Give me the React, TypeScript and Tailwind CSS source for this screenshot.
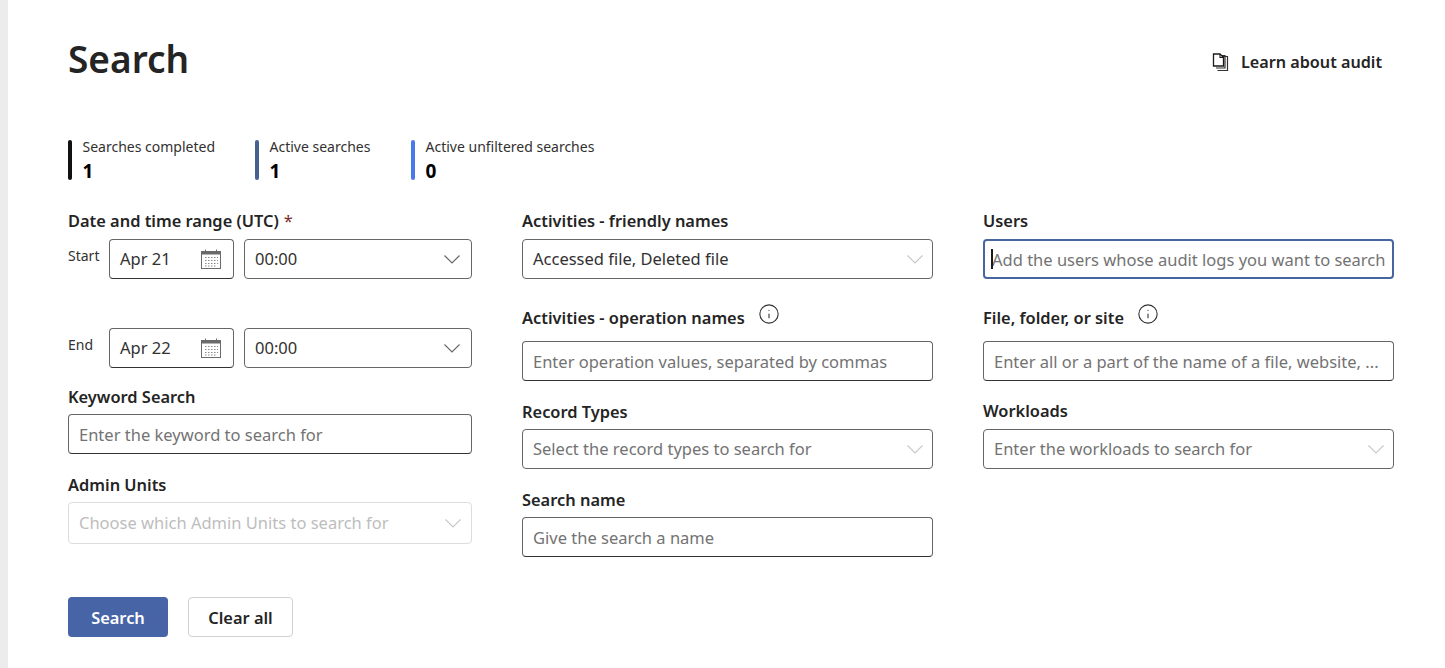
import { Info } from 'lucide-react'

function Chevron({ color }: { color: string }) {
  return (
    <svg width="16" height="9" viewBox="0 0 16 9" fill="none" className={`shrink-0 ${color}`}>
      <path d="M.5.5 8 8 15.5.5" stroke="currentColor" strokeWidth="1.1" />
    </svg>
  )
}

function CalendarIcon() {
  return (
    <svg width="22" height="22" viewBox="0 0 22 22" fill="none" className="shrink-0 text-[#6b6b6b]">
      <rect x="1.5" y="3.5" width="19" height="17" stroke="currentColor" />
      <rect x="1.5" y="3.5" width="19" height="3" fill="currentColor" />
      <path d="M5.5 1.5v3M16.5 1.5v3" stroke="currentColor" />
      <path
        d="M5 9.5h1.5M8 9.5h1.5M11 9.5h1.5M14 9.5h1.5M17 9.5h1M5 12.5h1.5M8 12.5h1.5M11 12.5h1.5M14 12.5h1.5M17 12.5h1M5 15.5h1.5M8 15.5h1.5M11 15.5h1.5M14 15.5h1.5M17 15.5h1M5 18h1.5M8 18h1.5M11 18h1.5M14 18h1.5"
        stroke="#8a8a8a"
      />
    </svg>
  )
}

function PagesIcon() {
  return (
    <svg width="18" height="19" viewBox="0 0 18 19" fill="none" className="shrink-0">
      <path d="M5 3.5h10.5v14H5.5" stroke="#323130" strokeWidth="1.2" />
      <path d="M4 2.5h9v12.5H4" stroke="#323130" strokeWidth="1.2" />
      <path d="M1.5 1H8l3.5 3.5V13h-10z" fill="#fff" stroke="#1b1a19" strokeWidth="1.3" />
      <path d="M8 1v3.5h3.5" stroke="#1b1a19" strokeWidth="1.1" />
    </svg>
  )
}

function Stat({ label, value, bar, width }: { label: string; value: string; bar: string; width: string }) {
  return (
    <div className={`flex h-10 gap-[10.5px] ${width}`}>
      <div className={`h-10 w-1 rounded-sm ${bar}`} />
      <div className="-mt-[2px]">
        <p className="text-[14px] leading-[18px] text-[#323130]">{label}</p>
        <p className="mt-1 text-[19px] font-bold leading-[22px] text-black">{value}</p>
      </div>
    </div>
  )
}

function Label({
  text,
  info,
  required,
  className,
}: {
  text: string
  info?: boolean
  required?: boolean
  className?: string
}) {
  return (
    <div className={`flex h-5 items-center text-[16.4px] font-semibold leading-5 text-[#242424] ${className ?? ''}`}>
      {text}
      {required && <span className="ml-[5px] font-normal text-[#7a2a2a]">*</span>}
      {info && <Info size={22} strokeWidth={1.2} className="-mt-2 ml-[13px] text-[#323130]" />}
    </div>
  )
}

function SelectBox({ text, placeholder }: { text?: string; placeholder?: string }) {
  return (
    <div className="flex h-10 items-center justify-between rounded border border-[#666] bg-white pl-[10px] pr-[9px]">
      <span className={`text-[16.5px] ${text ? 'text-[#323130]' : 'text-[#737373]'}`}>{text ?? placeholder}</span>
      <Chevron color="text-[#c8c8c8]" />
    </div>
  )
}

function TextBox({ placeholder }: { placeholder: string }) {
  return (
    <input
      placeholder={placeholder}
      className="block h-10 w-full rounded border border-[#666] border-b-[#333] bg-white px-[10px] text-[16.5px] outline-none placeholder:text-[#737373]"
    />
  )
}

function DateRow({ label, date }: { label: string; date: string }) {
  return (
    <div className="flex h-10">
      <span className="w-[41px] shrink-0 pt-[7px] text-[14px] leading-5 text-[#323130]">{label}</span>
      <div className="flex h-10 w-[125px] shrink-0 items-center justify-between rounded border border-[#666] border-b-[#333] pl-[10px] pr-[11px]">
        <span className="text-[16.5px] text-[#323130]">{date}</span>
        <CalendarIcon />
      </div>
      <div className="ml-[10px] flex h-10 flex-1 items-center justify-between rounded-sm border border-[#666] pl-[10px] pr-[11px]">
        <span className="text-[16.5px] text-[#323130]">00:00</span>
        <Chevron color="text-[#666]" />
      </div>
    </div>
  )
}

export default function App() {
  return (
    <div
      className="flex h-[668px] overflow-hidden bg-white"
      style={{ fontFamily: '"Noto Sans", "Open Sans", sans-serif' }}
    >
      <div className="w-2 shrink-0 bg-[#ececec]" />

      <div className="w-[1386px] shrink-0 pl-[60px]">
        {/* Header */}
        <div className="flex h-[140px] items-start justify-between">
          <h1 className="mt-[33px] text-[37px] font-semibold leading-[52px] text-[#242424]">Search</h1>
          <div className="mt-[50px] mr-[12px] flex items-center gap-[11px] text-[16.2px] font-semibold leading-6 text-[#242424]">
            <PagesIcon />
            Learn about audit
          </div>
        </div>

        {/* Counters */}
        <div className="flex">
          <Stat label="Searches completed" value="1" bar="bg-[#111]" width="w-[187px]" />
          <Stat label="Active searches" value="1" bar="bg-[#47618f]" width="w-[156px]" />
          <Stat label="Active unfiltered searches" value="0" bar="bg-[#4a7ae8]" width="w-[200px]" />
        </div>

        {/* Form columns */}
        <div className="mt-[31px] flex gap-[50px]">
          <div className="w-[404px] shrink-0">
            <Label text="Date and time range (UTC)" required />
            <div className="mt-2">
              <DateRow label="Start" date="Apr 21" />
            </div>
            <div className="mt-[49px]">
              <DateRow label="End" date="Apr 22" />
            </div>
            <Label text="Keyword Search" className="mt-[19px]" />
            <div className="mt-[7px]">
              <TextBox placeholder="Enter the keyword to search for" />
            </div>
            <Label text="Admin Units" className="mt-[21px]" />
            <div className="mt-[7px] flex h-[42px] items-center justify-between rounded border border-[#dcdcdc] pl-[10px] pr-[10px]">
              <span className="text-[16.5px] text-[#bdbdbd]">Choose which Admin Units to search for</span>
              <Chevron color="text-[#c8c8c8]" />
            </div>
          </div>

          <div className="w-[411px] shrink-0">
            <Label text="Activities - friendly names" />
            <div className="mt-2">
              <SelectBox text="Accessed file, Deleted file" />
            </div>
            <Label text="Activities - operation names" info className="mt-[29px]" />
            <div className="mt-[13px]">
              <TextBox placeholder="Enter operation values, separated by commas" />
            </div>
            <Label text="Record Types" className="mt-[21px]" />
            <div className="mt-[7px]">
              <SelectBox placeholder="Select the record types to search for" />
            </div>
            <Label text="Search name" className="mt-[21px]" />
            <div className="mt-[7px]">
              <TextBox placeholder="Give the search a name" />
            </div>
          </div>

          <div className="w-[411px] shrink-0">
            <Label text="Users" />
            <div className="relative mt-2">
              <input
                placeholder="Add the users whose audit logs you want to search"
                className="block h-10 w-full rounded border-2 border-[#47659f] bg-white pl-[7px] pr-1 text-[16.5px] outline-none placeholder:text-[#737373]"
              />
              <span className="absolute left-2 top-[10px] h-5 w-[2px] bg-[#1b1a19]" />
            </div>
            <Label text="File, folder, or site" info className="mt-[29px]" />
            <div className="mt-[13px]">
              <TextBox placeholder="Enter all or a part of the name of a file, website, ..." />
            </div>
            <Label text="Workloads" className="mt-[20px]" />
            <div className="mt-2">
              <SelectBox placeholder="Enter the workloads to search for" />
            </div>
          </div>
        </div>

        {/* Actions */}
        <div className="mt-10 flex gap-5">
          <button className="h-10 w-[100px] rounded bg-[#4765a6] pt-[2px] text-[16.4px] font-semibold text-white">
            Search
          </button>
          <button className="h-10 w-[105px] rounded border border-[#d1d1d1] bg-white pt-[2px] text-[16.4px] font-semibold text-[#242424]">
            Clear all
          </button>
        </div>
      </div>
    </div>
  )
}
